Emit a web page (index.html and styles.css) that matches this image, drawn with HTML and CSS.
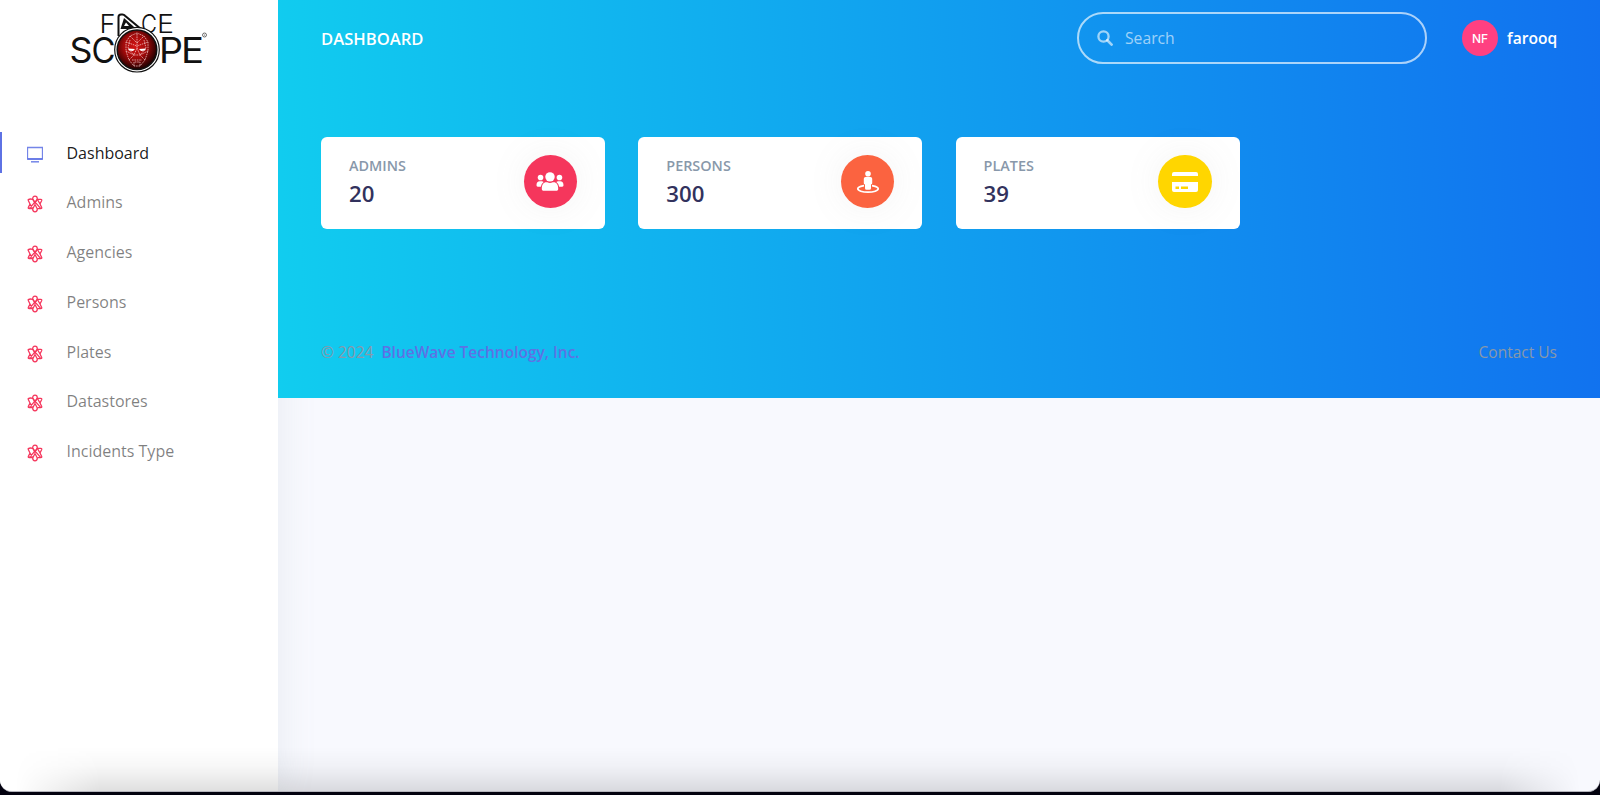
FILE: index.html
```html
<!DOCTYPE html>
<html lang="en">
<head>
<meta charset="utf-8">
<title>Dashboard</title>
<link rel="stylesheet" href="styles.css">
</head>
<body>
<svg class="defs" width="0" height="0">
  <symbol id="atom" viewBox="0 0 16 18">
    <g fill="none" stroke="#f5365c" stroke-width="1.300" stroke-linejoin="round">
      <path d="M8 1.200Q10.300 1.200 10.300 4L8 8.500 5.700 4Q5.700 1.200 8 1.200zM8 16.800Q10.300 16.800 10.300 14L8 9.500 5.700 14Q5.700 16.800 8 16.800z"/>
      <path d="M1.300 4.600Q3 3.600 5.700 4.300L13.800 13.700Q15.200 13.600 14.600 12.200L13 9l1.600-3.200Q15.200 4.400 13.800 4.300L10.300 4.300 2.200 13.700Q.8 13.600 1.400 12.200L3 9 1.400 5.800Q.9 4.900 1.300 4.600zM2.200 13.700h3.500M10.300 13.700h3.500M5.700 13.700L3 9M10.300 4.300L13 9"/>
    </g>
  </symbol>
</svg>
<div class="window">
  <aside class="sidebar">
    <svg class="logo" width="140" height="66" viewBox="68 10 140 66">
      <defs>
        <radialGradient id="ball" cx="45%" cy="42%" r="60%">
          <stop offset="0" stop-color="#d41515"/><stop offset=".5" stop-color="#a00a0a"/><stop offset="1" stop-color="#120000"/>
        </radialGradient>
      </defs>
      <g class="logo-text">
        <text x="99.500" y="33" font-size="26" textLength="16" lengthAdjust="spacingAndGlyphs">F</text>
        <text x="141" y="33" font-size="26" textLength="16" lengthAdjust="spacingAndGlyphs">C</text>
        <text x="157" y="33" font-size="26" textLength="17" lengthAdjust="spacingAndGlyphs">E</text>
        <g class="logo-wide">
          <text x="69.500" y="63" font-size="35" textLength="23" lengthAdjust="spacingAndGlyphs">S</text>
          <text x="91.500" y="63" font-size="35" textLength="24" lengthAdjust="spacingAndGlyphs">C</text>
          <text x="159" y="63" font-size="35" textLength="24" lengthAdjust="spacingAndGlyphs">P</text>
          <text x="181" y="63" font-size="35" textLength="23" lengthAdjust="spacingAndGlyphs">E</text>
        </g>
      </g>
      <path d="M118.500 36V17q0-2.500 2.500-2.500h1.500q1.500 0 2.500 1.200L141 29" fill="#fff" stroke="#111" stroke-width="2"/>
      <path d="M120.500 29l3.500-11 9 8 3 3z" fill="#111"/>
      <path d="M124 26l2-3.500 3 3.500z" fill="#fff"/>
      <circle cx="137" cy="49.700" r="22.300" fill="#fff" stroke="#111" stroke-width="1.200"/>
      <circle cx="137" cy="49.700" r="19.800" fill="url(#ball)" stroke="#111" stroke-width="1.500"/>
      <g fill="none" stroke="#f6d0d0" stroke-width=".7" stroke-dasharray="1.600 .8">
        <path d="M137 33l-7 3-4 6v9l3 9 5 6h6l5-6 3-9v-9l-4-6zM137 34v14l-3 7h6l-3-7M130 36l7 7 7-7M126 42l11 4 11-4M126 51l8 4-5 5M148 51l-8 4 5 5M132 60h10M134 66v-4h6v4M130 40l-2 8 6 7M144 40l2 8-6 7"/>
      </g>
      <path d="M128 48.500l7 .5-2 2-4-.5zM146 48.500l-7 .5 2 2 4-.5z" fill="#fff"/>
      <circle cx="204.500" cy="35" r="2" fill="none" stroke="#333" stroke-width=".7"/>
      <circle cx="204.500" cy="35" r=".6" fill="#555"/>
    </svg>
    <nav class="nav">
      <a class="nav-item active"><svg class="ico" width="16" height="18" viewBox="0 0 16 18"><path d="M.5 1.500h15v11.500H.5z" fill="none" stroke="#7485e8" stroke-width="1.300"/><path d="M.5 13h15" stroke="#5e72e4" stroke-width="1.500"/><path d="M4 15.800h8" stroke="#7485e8" stroke-width="1.500"/></svg><span>Dashboard</span></a>
      <a class="nav-item"><svg class="ico" width="16" height="18"><use href="#atom"/></svg><span>Admins</span></a>
      <a class="nav-item"><svg class="ico" width="16" height="18"><use href="#atom"/></svg><span>Agencies</span></a>
      <a class="nav-item"><svg class="ico" width="16" height="18"><use href="#atom"/></svg><span>Persons</span></a>
      <a class="nav-item"><svg class="ico" width="16" height="18"><use href="#atom"/></svg><span>Plates</span></a>
      <a class="nav-item"><svg class="ico" width="16" height="18"><use href="#atom"/></svg><span>Datastores</span></a>
      <a class="nav-item"><svg class="ico" width="16" height="18"><use href="#atom"/></svg><span>Incidents Type</span></a>
    </nav>
  </aside>
  <main class="main">
    <div class="header">
      <div class="topbar">
        <span class="title">DASHBOARD</span>
        <div class="search">
          <svg width="16" height="16" viewBox="0 0 16 16"><circle cx="6.500" cy="6.500" r="5.100" fill="none" stroke="currentColor" stroke-width="2.300"/><path d="M10.300 10.300l4.300 4.300" stroke="currentColor" stroke-width="2.700" stroke-linecap="round"/></svg>
          <span>Search</span>
        </div>
        <div class="avatar">NF</div>
        <span class="user">farooq</span>
      </div>
      <div class="cards">
        <div class="card">
          <div><div class="label">ADMINS</div><div class="value">20</div></div>
          <div class="badge red"><svg width="28" height="21" viewBox="0.500 0.500 29 21" fill="#fff"><circle cx="15" cy="6.200" r="4.900"/><circle cx="5.200" cy="6.900" r="2.900"/><circle cx="24.800" cy="6.900" r="2.900"/><path d="M6.500 18.500c0-4 1.600-6.600 4.800-6.600h.8q2.900 1.300 5.800 0h.8c3.200 0 4.800 2.600 4.800 6.600 0 1.400-.8 2.200-2.100 2.200H8.600c-1.300 0-2.100-.8-2.100-2.200zM1 15c0-2.700 1.200-4.200 3.500-4.200h2q1.100 0 1.900.6-2.500 1.700-2.900 5.100H2.300Q1 16.500 1 15zM29 15c0-2.700-1.200-4.200-3.500-4.200h-2q-1.100 0-1.900.6 2.500 1.700 2.900 5.100h3.200q1.300 0 1.300-1.500z"/></svg></div>
        </div>
        <div class="card">
          <div><div class="label">PERSONS</div><div class="value">300</div></div>
          <div class="badge orange"><svg width="24" height="24" viewBox="0 0 24 24" fill="#fff"><ellipse cx="12" cy="18.800" rx="10.200" ry="3.400" fill="none" stroke="#fff" stroke-width="1.700"/><rect x="9" y="10" width="6" height="9.500" fill="#fb6340" stroke="#fb6340" stroke-width="2"/><circle cx="12" cy="3.700" r="2.800"/><path d="M9.500 7h5q1.700 0 1.700 1.700v4.600q0 1-1.200 1.200v3.700q0 1.600-1.600 1.600h-2.800Q9 19.800 9 18.200v-3.700q-1.200-.2-1.200-1.200V8.700Q7.800 7 9.500 7z"/></svg></div>
        </div>
        <div class="card">
          <div><div class="label">PLATES</div><div class="value">39</div></div>
          <div class="badge yellow"><svg width="26" height="20" viewBox="0 0 26 20"><path d="M0 4V2q0-2 2-2h22q2 0 2 2v2zM0 10h26v8q0 2-2 2H2q-2 0-2-2z" fill="#fff"/><path d="M3.500 14.500h3.500v2.500H3.500zM9 14.500h7v2.500H9z" fill="#ffd600"/></svg></div>
        </div>
      </div>
      <footer class="footer">
        <span>© 2024 <a class="brand">BlueWave Technology, Inc.</a></span>
        <span>Contact Us</span>
      </footer>
    </div>
  </main>
  <div class="shade"></div>
</div>
</body>
</html>
```
FILE: styles.css
```css
* { box-sizing: border-box; }
html { background: #03020f; }
body { margin: 0; height: 795px; overflow: hidden; font-family: "Open Sans", sans-serif; font-size: 16px; }
.defs { position: absolute; }
.window { position: relative; display: flex; height: 792px; overflow: hidden; border-radius: 0 0 12px 12px; background: #f8f9fe; border-bottom: 1px solid #b5b5bd; }
.sidebar { width: 278px; flex: none; background: #fff; box-shadow: 0 0 36px rgba(136, 152, 170, .15); padding-top: 10px; }
.logo { display: block; margin-left: 68px; overflow: visible; }
.logo-text { font-family: "Inter", sans-serif; font-weight: 300; fill: #111; }
.logo-wide { font-weight: 400; }
.nav { display: flex; flex-direction: column; gap: 8.800px; margin-top: 56px; }
.nav-item { display: flex; align-items: center; height: 41px; padding-left: 27px; color: rgba(0, 0, 0, .5); }
.nav-item .ico { margin: 4px 23.500px 0 0; flex: none; }
.nav-item.active { color: rgba(0, 0, 0, .9); border-left: 2px solid #5e72e4; padding-left: 25px; }
.main { flex: 1; position: relative; }
.header { height: 398px; padding: 12px 43px 0; background: linear-gradient(87deg, #11cdef 0, #1171ef 100%); }
.topbar { display: flex; align-items: center; height: 52px; color: #fff; font-weight: 600; }
.title { flex: 1; font-size: 16.6px; }
.search { display: flex; align-items: center; gap: 12px; width: 350px; height: 52px; padding-left: 18px; border: 2px solid rgba(255, 255, 255, .65); border-radius: 26px; color: rgba(255, 255, 255, .6); font-weight: 400; font-size: 15.700px; }
.avatar { display: grid; place-items: center; width: 36px; height: 36px; margin: 0 9px 0 35px; border-radius: 50%; background: #ff4081; font-family: "Inter", sans-serif; font-size: 12px; font-weight: 500; }
.user { width: 50px; font-size: 15.600px; white-space: nowrap; }
.cards { display: grid; grid-template-columns: repeat(3, 284px); gap: 33.300px; margin-top: 72.500px; }
.card { display: flex; justify-content: space-between; height: 92.500px; padding: 18.400px 28px; background: #fff; border-radius: 6px; }
.label { color: #8898aa; font-weight: 600; font-size: 14.400px; line-height: 21px; }
.value { color: #32325d; font-weight: 600; font-size: 22.200px; line-height: 35px; }
.badge { display: grid; place-items: center; width: 53.500px; height: 53.500px; border-radius: 50%; box-shadow: 0 0 36px rgba(136, 136, 136, .1); }
.red { background: #f5365c; }
.orange { background: #fb6340; }
.yellow { background: #ffd600; }
.footer { display: flex; justify-content: space-between; margin-top: 111px; color: #8898aa; font-size: 15.500px; line-height: 24px; }
.brand { margin-left: 4px; color: #5e72e4; font-weight: 600; }
.shade { position: absolute; left: 0; right: 0; bottom: 0; height: 44px; background: linear-gradient(to bottom, rgba(0, 0, 0, 0), rgba(0, 0, 0, .03) 45%, rgba(0, 0, 0, .12)); -webkit-mask-image: linear-gradient(to right, transparent 15px, #000 100px, #000 1500px, transparent 1580px); mask-image: linear-gradient(to right, transparent 15px, #000 100px, #000 1500px, transparent 1580px); }
```
